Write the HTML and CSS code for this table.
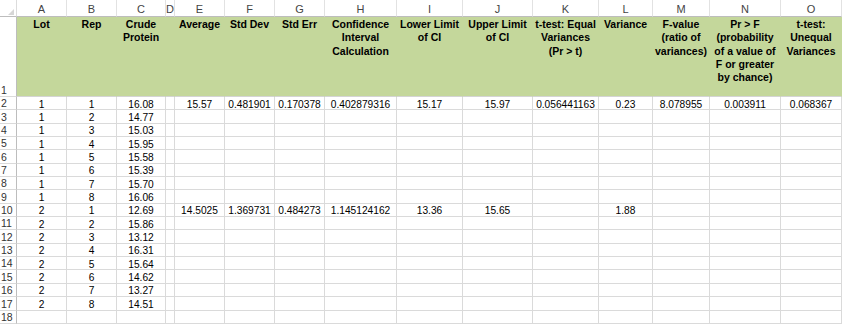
FILE: index.html
```html
<!DOCTYPE html>
<html>
<head>
<meta charset="utf-8">
<link rel="stylesheet" href="styles.css">
</head>
<body>
<div class="sheet">
  <div class="corner"><span class="tri"></span></div>
  <div class="ch">A</div><div class="ch">B</div><div class="ch">C</div><div class="ch">D</div><div class="ch">E</div><div class="ch">F</div><div class="ch">G</div><div class="ch">H</div><div class="ch">I</div><div class="ch">J</div><div class="ch">K</div><div class="ch">L</div><div class="ch">M</div><div class="ch">N</div><div class="ch">O</div>

  <div class="rh rh1">1</div>
  <div class="hc">Lot</div>
  <div class="hc">Rep</div>
  <div class="hc">Crude<br>Protein</div>
  <div class="hc"></div>
  <div class="hc">Average</div>
  <div class="hc">Std Dev</div>
  <div class="hc">Std Err</div>
  <div class="hc">Confidence<br>Interval<br>Calculation</div>
  <div class="hc">Lower Limit<br>of CI</div>
  <div class="hc">Upper Limit<br>of CI</div>
  <div class="hc">t-test: Equal<br>Variances<br>(Pr &gt; t)</div>
  <div class="hc">Variance</div>
  <div class="hc">F-value<br>(ratio of<br>variances)</div>
  <div class="hc">Pr &gt; F<br>(probability<br>of a value of<br>F or greater<br>by chance)</div>
  <div class="hc">t-test:<br>Unequal<br>Variances</div>

  <div class="rh">2</div><div class="c">1</div><div class="c">1</div><div class="c">16.08</div><div class="c"></div><div class="c">15.57</div><div class="c">0.481901</div><div class="c">0.170378</div><div class="c">0.402879316</div><div class="c">15.17</div><div class="c">15.97</div><div class="c">0.056441163</div><div class="c">0.23</div><div class="c">8.078955</div><div class="c">0.003911</div><div class="c">0.068367</div>

  <div class="rh">3</div><div class="c">1</div><div class="c">2</div><div class="c">14.77</div><div class="c"></div><div class="c"></div><div class="c"></div><div class="c"></div><div class="c"></div><div class="c"></div><div class="c"></div><div class="c"></div><div class="c"></div><div class="c"></div><div class="c"></div><div class="c"></div>

  <div class="rh">4</div><div class="c">1</div><div class="c">3</div><div class="c">15.03</div><div class="c"></div><div class="c"></div><div class="c"></div><div class="c"></div><div class="c"></div><div class="c"></div><div class="c"></div><div class="c"></div><div class="c"></div><div class="c"></div><div class="c"></div><div class="c"></div>

  <div class="rh">5</div><div class="c">1</div><div class="c">4</div><div class="c">15.95</div><div class="c"></div><div class="c"></div><div class="c"></div><div class="c"></div><div class="c"></div><div class="c"></div><div class="c"></div><div class="c"></div><div class="c"></div><div class="c"></div><div class="c"></div><div class="c"></div>

  <div class="rh">6</div><div class="c">1</div><div class="c">5</div><div class="c">15.58</div><div class="c"></div><div class="c"></div><div class="c"></div><div class="c"></div><div class="c"></div><div class="c"></div><div class="c"></div><div class="c"></div><div class="c"></div><div class="c"></div><div class="c"></div><div class="c"></div>

  <div class="rh">7</div><div class="c">1</div><div class="c">6</div><div class="c">15.39</div><div class="c"></div><div class="c"></div><div class="c"></div><div class="c"></div><div class="c"></div><div class="c"></div><div class="c"></div><div class="c"></div><div class="c"></div><div class="c"></div><div class="c"></div><div class="c"></div>

  <div class="rh">8</div><div class="c">1</div><div class="c">7</div><div class="c">15.70</div><div class="c"></div><div class="c"></div><div class="c"></div><div class="c"></div><div class="c"></div><div class="c"></div><div class="c"></div><div class="c"></div><div class="c"></div><div class="c"></div><div class="c"></div><div class="c"></div>

  <div class="rh">9</div><div class="c">1</div><div class="c">8</div><div class="c">16.06</div><div class="c"></div><div class="c"></div><div class="c"></div><div class="c"></div><div class="c"></div><div class="c"></div><div class="c"></div><div class="c"></div><div class="c"></div><div class="c"></div><div class="c"></div><div class="c"></div>

  <div class="rh">10</div><div class="c">2</div><div class="c">1</div><div class="c">12.69</div><div class="c"></div><div class="c">14.5025</div><div class="c">1.369731</div><div class="c">0.484273</div><div class="c">1.145124162</div><div class="c">13.36</div><div class="c">15.65</div><div class="c"></div><div class="c">1.88</div><div class="c"></div><div class="c"></div><div class="c"></div>

  <div class="rh">11</div><div class="c">2</div><div class="c">2</div><div class="c">15.86</div><div class="c"></div><div class="c"></div><div class="c"></div><div class="c"></div><div class="c"></div><div class="c"></div><div class="c"></div><div class="c"></div><div class="c"></div><div class="c"></div><div class="c"></div><div class="c"></div>

  <div class="rh">12</div><div class="c">2</div><div class="c">3</div><div class="c">13.12</div><div class="c"></div><div class="c"></div><div class="c"></div><div class="c"></div><div class="c"></div><div class="c"></div><div class="c"></div><div class="c"></div><div class="c"></div><div class="c"></div><div class="c"></div><div class="c"></div>

  <div class="rh">13</div><div class="c">2</div><div class="c">4</div><div class="c">16.31</div><div class="c"></div><div class="c"></div><div class="c"></div><div class="c"></div><div class="c"></div><div class="c"></div><div class="c"></div><div class="c"></div><div class="c"></div><div class="c"></div><div class="c"></div><div class="c"></div>

  <div class="rh">14</div><div class="c">2</div><div class="c">5</div><div class="c">15.64</div><div class="c"></div><div class="c"></div><div class="c"></div><div class="c"></div><div class="c"></div><div class="c"></div><div class="c"></div><div class="c"></div><div class="c"></div><div class="c"></div><div class="c"></div><div class="c"></div>

  <div class="rh">15</div><div class="c">2</div><div class="c">6</div><div class="c">14.62</div><div class="c"></div><div class="c"></div><div class="c"></div><div class="c"></div><div class="c"></div><div class="c"></div><div class="c"></div><div class="c"></div><div class="c"></div><div class="c"></div><div class="c"></div><div class="c"></div>

  <div class="rh">16</div><div class="c">2</div><div class="c">7</div><div class="c">13.27</div><div class="c"></div><div class="c"></div><div class="c"></div><div class="c"></div><div class="c"></div><div class="c"></div><div class="c"></div><div class="c"></div><div class="c"></div><div class="c"></div><div class="c"></div><div class="c"></div>

  <div class="rh">17</div><div class="c">2</div><div class="c">8</div><div class="c">14.51</div><div class="c"></div><div class="c"></div><div class="c"></div><div class="c"></div><div class="c"></div><div class="c"></div><div class="c"></div><div class="c"></div><div class="c"></div><div class="c"></div><div class="c"></div><div class="c"></div>

  <div class="rh">18</div><div class="c"></div><div class="c"></div><div class="c"></div><div class="c"></div><div class="c"></div><div class="c"></div><div class="c"></div><div class="c"></div><div class="c"></div><div class="c"></div><div class="c"></div><div class="c"></div><div class="c"></div><div class="c"></div><div class="c"></div>
</div>
</body>
</html>
```

FILE: styles.css
```css
html, body {
  margin: 0;
  padding: 0;
  background: #ffffff;
  overflow: hidden;
}

.sheet {
  display: grid;
  grid-template-columns: 17px 50px 50px 49px 9px 50px 50px 50px 72px 66px 70px 66px 54px 57px 71px 61px;
  grid-template-rows: 17px 80px repeat(17, 13.35px);
  width: 842px;
  height: 324px;
  font-family: "Liberation Sans", Arial, sans-serif;
  color: #000;
}

.sheet > div {
  box-sizing: border-box;
  overflow: hidden;
  white-space: nowrap;
}

.corner {
  position: relative;
  border-right: 1px solid #dcdcdc;
  border-bottom: 1px solid #bdbdbd;
}

.tri {
  position: absolute;
  left: 8px;
  top: 9px;
  width: 0;
  height: 0;
  border-left: 6px solid transparent;
  border-bottom: 6px solid #d6d6d6;
}

.ch {
  display: flex;
  align-items: center;
  justify-content: center;
  font-size: 11px;
  color: #444;
  padding-top: 1px;
  border-right: 1px solid #e2e2e2;
  border-bottom: 1px solid #bdbdbd;
}

.rh {
  display: flex;
  align-items: flex-end;
  padding-left: 1px;
  padding-bottom: 0;
  font-size: 10.5px;
  line-height: 12px;
  color: #333;
  border-right: 1px solid #bdbdbd;
  border-bottom: 1px solid #dadada;
}

.rh1 {
  padding-bottom: 0;
}

.hc {
  background: #c4d79b;
  border-right: 1px solid #c4d79b;
  border-bottom: 1px solid #d4d4d4;
  text-align: center;
  font-weight: bold;
  font-size: 10.5px;
  line-height: 13.3px;
  padding-top: 1px;
}

.c {
  text-align: center;
  font-size: 10.2px;
  line-height: 12px;
  padding-top: 1.5px;
  border-right: 1px solid #dadada;
  border-bottom: 1px solid #dadada;
}
```
